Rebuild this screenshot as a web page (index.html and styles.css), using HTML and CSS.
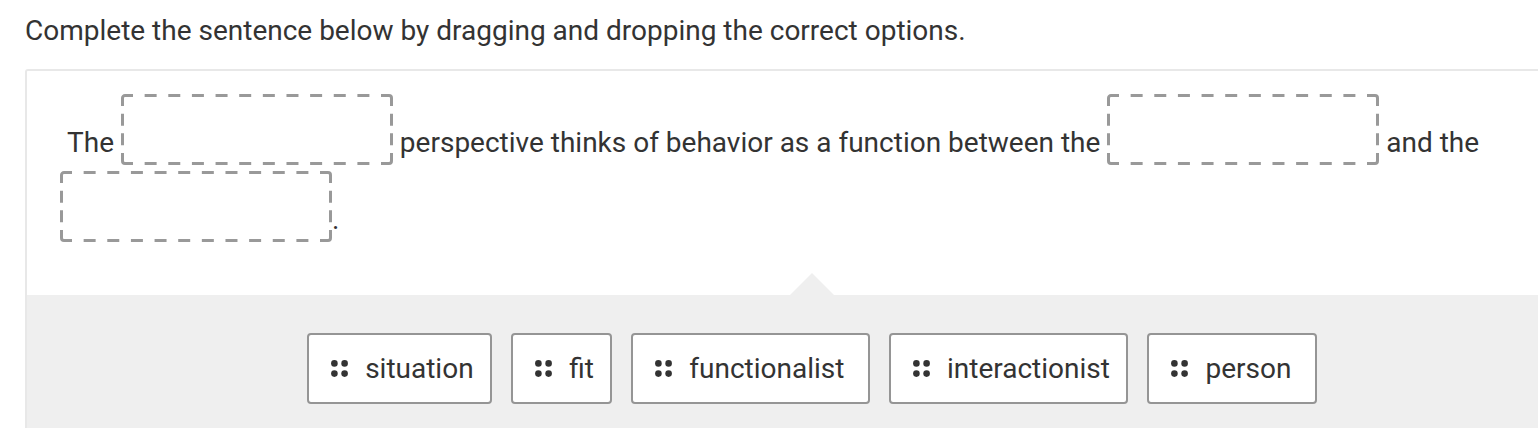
FILE: index.html
```html
<!DOCTYPE html>
<html lang="en">
<head>
<meta charset="utf-8">
<title>Drag and drop</title>
<link rel="stylesheet" href="styles.css">
</head>
<body>
<div class="page">
  <p class="prompt">Complete the sentence below by dragging and dropping the correct options.</p>
  <div class="question">
    <div class="sentence">
      <p class="sentence-text">The <span class="drop"><svg class="drop-frame" viewBox="0 0 272 71" aria-hidden="true"><path class="corner" d="M1.5 12 V4 A2.5 2.5 0 0 1 4 1.5 H12"/><path class="corner" d="M260 1.5 H268 A2.5 2.5 0 0 1 270.5 4 V12"/><path class="corner" d="M270.5 59 V67 A2.5 2.5 0 0 1 268 69.5 H260"/><path class="corner" d="M12 69.5 H4 A2.5 2.5 0 0 1 1.5 67 V59"/><line class="edge-h" x1="12" y1="1.5" x2="260" y2="1.5"/><line class="edge-h" x1="12" y1="69.5" x2="260" y2="69.5"/><line class="edge-v" x1="1.5" y1="12" x2="1.5" y2="59"/><line class="edge-v" x1="270.5" y1="12" x2="270.5" y2="59"/></svg></span> perspective thinks of behavior as a function between the <span class="drop"><svg class="drop-frame" viewBox="0 0 272 71" aria-hidden="true"><path class="corner" d="M1.5 12 V4 A2.5 2.5 0 0 1 4 1.5 H12"/><path class="corner" d="M260 1.5 H268 A2.5 2.5 0 0 1 270.5 4 V12"/><path class="corner" d="M270.5 59 V67 A2.5 2.5 0 0 1 268 69.5 H260"/><path class="corner" d="M12 69.5 H4 A2.5 2.5 0 0 1 1.5 67 V59"/><line class="edge-h" x1="12" y1="1.5" x2="260" y2="1.5"/><line class="edge-h" x1="12" y1="69.5" x2="260" y2="69.5"/><line class="edge-v" x1="1.5" y1="12" x2="1.5" y2="59"/><line class="edge-v" x1="270.5" y1="12" x2="270.5" y2="59"/></svg></span> and the <span class="drop"><svg class="drop-frame" viewBox="0 0 272 71" aria-hidden="true"><path class="corner" d="M1.5 12 V4 A2.5 2.5 0 0 1 4 1.5 H12"/><path class="corner" d="M260 1.5 H268 A2.5 2.5 0 0 1 270.5 4 V12"/><path class="corner" d="M270.5 59 V67 A2.5 2.5 0 0 1 268 69.5 H260"/><path class="corner" d="M12 69.5 H4 A2.5 2.5 0 0 1 1.5 67 V59"/><line class="edge-h" x1="12" y1="1.5" x2="260" y2="1.5"/><line class="edge-h" x1="12" y1="69.5" x2="260" y2="69.5"/><line class="edge-v" x1="1.5" y1="12" x2="1.5" y2="59"/><line class="edge-v" x1="270.5" y1="12" x2="270.5" y2="59"/></svg></span>.</p>
    </div>
    <div class="options">
      <div class="chips">
        <div class="chip"><svg class="grip" viewBox="0 0 17 17" aria-hidden="true"><circle cx="3.4" cy="3.4" r="3.3"/><circle cx="13.6" cy="3.4" r="3.3"/><circle cx="3.4" cy="13.6" r="3.3"/><circle cx="13.6" cy="13.6" r="3.3"/></svg><span>situation</span></div>
        <div class="chip"><svg class="grip" viewBox="0 0 17 17" aria-hidden="true"><circle cx="3.4" cy="3.4" r="3.3"/><circle cx="13.6" cy="3.4" r="3.3"/><circle cx="3.4" cy="13.6" r="3.3"/><circle cx="13.6" cy="13.6" r="3.3"/></svg><span>fit</span></div>
        <div class="chip chip-roomy"><svg class="grip" viewBox="0 0 17 17" aria-hidden="true"><circle cx="3.4" cy="3.4" r="3.3"/><circle cx="13.6" cy="3.4" r="3.3"/><circle cx="3.4" cy="13.6" r="3.3"/><circle cx="13.6" cy="13.6" r="3.3"/></svg><span>functionalist</span></div>
        <div class="chip"><svg class="grip" viewBox="0 0 17 17" aria-hidden="true"><circle cx="3.4" cy="3.4" r="3.3"/><circle cx="13.6" cy="3.4" r="3.3"/><circle cx="3.4" cy="13.6" r="3.3"/><circle cx="13.6" cy="13.6" r="3.3"/></svg><span>interactionist</span></div>
        <div class="chip chip-roomy"><svg class="grip" viewBox="0 0 17 17" aria-hidden="true"><circle cx="3.4" cy="3.4" r="3.3"/><circle cx="13.6" cy="3.4" r="3.3"/><circle cx="3.4" cy="13.6" r="3.3"/><circle cx="13.6" cy="13.6" r="3.3"/></svg><span>person</span></div>
      </div>
    </div>
  </div>
</div>
</body>
</html>
```

FILE: styles.css
```css
html, body {
  margin: 0;
  padding: 0;
  background: #ffffff;
}

body {
  font-family: Roboto, "Liberation Sans", sans-serif;
  color: #333333;
  overflow: hidden;
}

.page {
  padding: 15px 0 0 25px;
}

.prompt {
  margin: 0 0 22px 0;
  font-size: 28px;
  line-height: 32px;
}

.question {
  width: 1574px;
  border: 2px solid #e8e8e8;
  border-bottom: none;
  border-radius: 3px 0 0 0;
  box-sizing: border-box;
}

.sentence {
  padding: 20px 34px 50px 33px;
}

.sentence-text {
  margin: 0;
  font-size: 28px;
  line-height: 34px;
  text-indent: 7px;
}

.drop {
  display: inline-block;
  width: 272px;
  height: 71px;
  margin: 3px 0 3px 0;
  vertical-align: -16px;
  text-indent: 0;
}

.drop-frame {
  display: block;
  width: 272px;
  height: 71px;
  fill: none;
  stroke: #999999;
  stroke-width: 3;
}

.drop-frame .edge-h {
  stroke-dasharray: 12 11.64;
  stroke-dashoffset: 12;
}

.drop-frame .edge-v {
  stroke-dasharray: 12 7.67;
  stroke-dashoffset: 12;
}

.options {
  position: relative;
  background: #efefef;
  padding: 38px 0 38px 0;
}

.options::before {
  content: "";
  position: absolute;
  top: -22px;
  left: 50%;
  margin-left: -22px;
  border-left: 22px solid transparent;
  border-right: 22px solid transparent;
  border-bottom: 22px solid #efefef;
}

.chips {
  display: flex;
  justify-content: center;
  gap: 19px;
}

.chip {
  display: flex;
  align-items: center;
  gap: 17px;
  box-sizing: border-box;
  height: 71px;
  padding: 0 16.5px 0 22px;
  background: #ffffff;
  border: 2px solid #959595;
  border-radius: 4px;
  font-size: 28px;
  line-height: 1;
}

.chip-roomy {
  padding-right: 23.5px;
}

.grip {
  width: 17px;
  height: 17px;
  fill: #333333;
  flex: none;
}
```
